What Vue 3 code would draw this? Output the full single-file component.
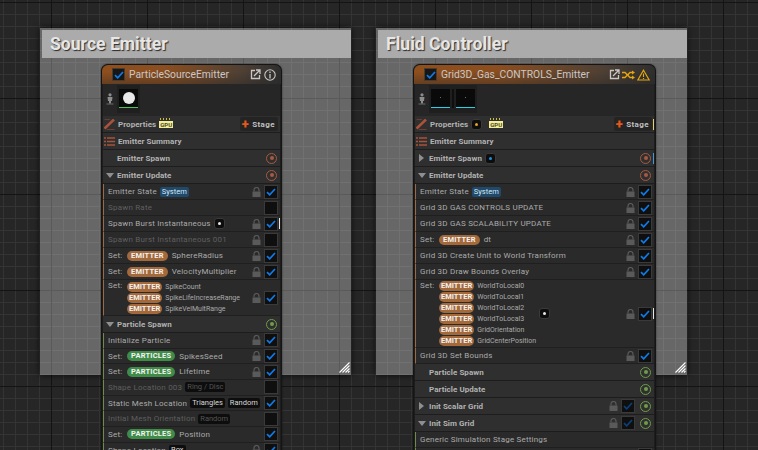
<template>
  <div class="graph">
    <div v-for="c in comments" :key="c.title" class="comment" :class="c.cls">
      <div class="comment-title">{{ c.title }}</div>
      <svg class="grip" width="11" height="11" viewBox="0 0 11 11">
        <path d="M0.5 10.5 L10.5 0.5 M3.5 10.5 L10.5 3.5 M6.5 10.5 L10.5 6.5 M9 10.5 L10.5 9" stroke="#fff" stroke-width="1.1" fill="none" />
      </svg>
    </div>

    <div v-for="n in nodes" :key="n.title" class="node" :class="n.cls">
      <div class="node-head">
        <span class="check head-check">
          <svg width="10" height="8" viewBox="0 0 10 8"><path d="M1 4.2 L3.7 6.8 L9 1" fill="none" stroke="#0f7be8" stroke-width="1.7" /></svg>
        </span>
        <span class="node-title">{{ n.title }}</span>
        <span class="spacer"></span>
        <svg class="head-icon" width="11" height="11" viewBox="0 0 11 11">
          <path d="M5 1.5 H1.5 V9.5 H9.5 V6" fill="none" stroke="#c8c8c8" stroke-width="1.3" />
          <path d="M4 7 L9.5 1.5 M6 1 H10 V5" fill="none" stroke="#c8c8c8" stroke-width="1.3" />
        </svg>
        <svg v-if="n.warn" class="head-icon" width="13" height="10" viewBox="0 0 13 10">
          <path d="M0 2.5 H3 L8 7.5 H10.5 M0 7.5 H3 L8 2.5 H10.5" fill="none" stroke="#e5a50f" stroke-width="1.3" />
          <path d="M10 0.5 L13 2.5 L10 4.5 Z M10 5.5 L13 7.5 L10 9.5 Z" fill="#e5a50f" />
        </svg>
        <svg v-if="n.warn" class="head-icon" width="13" height="12" viewBox="0 0 13 12">
          <path d="M6.5 1.2 L12.2 11 H0.8 Z" fill="none" stroke="#e5a50f" stroke-width="1.2" />
          <path d="M6.5 4.4 V8 M6.5 8.9 V10" stroke="#e5a50f" stroke-width="1.1" />
        </svg>
        <svg v-else class="head-icon head-info" width="12" height="12" viewBox="0 0 12 12">
          <circle cx="6" cy="6" r="5.2" fill="none" stroke="#c8c8c8" stroke-width="1.1" />
          <path d="M6 5 V9.4 M6 2.6 V4" stroke="#c8c8c8" stroke-width="1.3" />
        </svg>
      </div>

      <div class="thumbs">
        <svg width="8" height="12" viewBox="0 0 8 12">
          <circle cx="4" cy="1.8" r="1.6" fill="#8d8d8d" />
          <path d="M1.5 4 H6.5 L6 8 H5 V10.5 H3 V8 H2 Z" fill="#8d8d8d" />
          <path d="M0.5 11 H7.5" stroke="#6a6a6a" stroke-width="1" />
        </svg>
        <div class="thumb-strip">
          <template v-for="(t, i) in n.thumbs" :key="i">
            <span v-if="i > 0" class="thumb-sep"></span>
            <span class="thumb" :class="t"><i></i></span>
          </template>
        </div>
      </div>

      <div class="row props">
        <svg class="row-icon" width="11" height="11" viewBox="0 0 11 11">
          <path d="M0.5 9.5 L10 0.5" stroke="#a9533a" stroke-width="2.6" />
          <path d="M0.5 0.6 H6" stroke="#6e4034" stroke-width="1" fill="none" />
          <path d="M3 10.5 H10.5" stroke="#6e4034" stroke-width="1" fill="none" />
        </svg>
        <span class="section-label">Properties</span>
        <span v-if="n.warn" class="dot dot-amber"><i></i></span>
        <span class="gpu" :class="{ 'gpu-far': n.warn }">GPU</span>
        <span class="spacer"></span>
        <span class="stage"><b>+</b>Stage</span>
        <span v-if="n.warn" class="tick tick-yellow"></span>
      </div>
      <div class="row props">
        <svg class="row-icon" width="11" height="9" viewBox="0 0 11 9">
          <path d="M0 1 H2 M0 4.5 H2 M0 8 H2 M3 1 H11 M3 4.5 H11 M3 8 H11" stroke="#a9533a" stroke-width="1.4" />
        </svg>
        <span class="section-label">Emitter Summary</span>
      </div>

      <template v-for="(r, i) in n.rows" :key="i">
        <div v-if="r.section" class="row section">
          <span class="arrow" :class="r.arrow"></span>
          <span class="section-label">{{ r.section }}</span>
          <span v-if="r.dot" class="dot dot-blue"><i></i></span>
          <span class="spacer"></span>
          <svg v-if="r.check" class="lock" width="9" height="10" viewBox="0 0 9 10">
            <path d="M2 4.5 V3 A2.5 2.5 0 0 1 7 3 V4.5" fill="none" stroke="#5a5a5a" stroke-width="1.2" />
            <rect x="0.5" y="4.5" width="8" height="5.5" fill="#5a5a5a" />
          </svg>
          <span v-if="r.check" class="check section-check">
            <svg width="10" height="8" viewBox="0 0 10 8"><path d="M1 4.2 L3.7 6.8 L9 1" fill="none" stroke="#0b3f78" stroke-width="1.7" /></svg>
          </span>
          <span class="pin" :class="r.pin"><i></i></span>
          <span v-if="r.tick" class="tick tick-blue"></span>
        </div>

        <div v-else class="row module" :class="[r.accent, { off: r.off, tall: r.tall }]">
          <template v-if="r.sets">
            <span class="set-word" :class="{ 'set-top': r.sets.length > 1 }">Set:</span>
            <div class="set-list" :class="{ multi: r.sets.length > 1 }">
              <div v-for="s in r.sets" :key="s.name" class="set-line">
                <span class="pill" :class="s.pill.toLowerCase()">{{ s.pill }}</span>
                <span>{{ s.name }}</span>
              </div>
            </div>
          </template>
          <span v-else class="label">{{ r.label }}</span>
          <span v-for="c in r.chips" :key="c" class="chip" :class="{ system: c === 'System' }">{{ c }}</span>
          <span v-if="r.dot" class="dot"><i></i></span>
          <span class="spacer"></span>
          <svg v-if="r.lock" class="lock" width="9" height="10" viewBox="0 0 9 10">
            <path d="M2 4.5 V3 A2.5 2.5 0 0 1 7 3 V4.5" fill="none" stroke="#5a5a5a" stroke-width="1.2" />
            <rect x="0.5" y="4.5" width="8" height="5.5" fill="#5a5a5a" />
          </svg>
          <span v-if="r.check !== undefined" class="check">
            <svg v-if="r.check" width="10" height="8" viewBox="0 0 10 8"><path d="M1 4.2 L3.7 6.8 L9 1" fill="none" stroke="#0f7be8" stroke-width="1.7" /></svg>
          </span>
          <span v-if="r.tick" class="tick"></span>
        </div>
      </template>
    </div>
  </div>
</template>

<script setup>
const comments = [
  { title: "Source Emitter", cls: "comment-source" },
  { title: "Fluid Controller", cls: "comment-fluid" },
];

const emitter = (name) => ({ pill: "EMITTER", name });
const particles = (name) => ({ pill: "PARTICLES", name });

const nodes = [
  {
    title: "ParticleSourceEmitter",
    cls: "node-source",
    thumbs: ["thumb-ball"],
    rows: [
      { section: "Emitter Spawn", pin: "orange" },
      { section: "Emitter Update", arrow: "down", pin: "orange" },
      { label: "Emitter State", chips: ["System"], lock: true, check: true, accent: "amber" },
      { label: "Spawn Rate", off: true, check: false, accent: "amber" },
      { label: "Spawn Burst Instantaneous", dot: true, lock: true, check: true, tick: true, accent: "amber" },
      { label: "Spawn Burst Instantaneous 001", off: true, lock: true, check: false, accent: "amber" },
      { sets: [emitter("SphereRadius")], lock: true, check: true, accent: "amber" },
      { sets: [emitter("VelocityMultiplier")], lock: true, check: true, accent: "amber" },
      {
        sets: [emitter("SpikeCount"), emitter("SpikeLifeIncreaseRange"), emitter("SpikeVelMultRange")],
        lock: true,
        check: true,
        tall: true,
        accent: "amber",
      },
      { section: "Particle Spawn", arrow: "down", pin: "green" },
      { label: "Initialize Particle", lock: true, check: true, accent: "olive" },
      { sets: [particles("SpikesSeed")], lock: true, check: true, accent: "olive" },
      { sets: [particles("Lifetime")], lock: true, check: true, accent: "olive" },
      { label: "Shape Location 003", chips: ["Ring / Disc"], off: true, check: false, accent: "olive" },
      { label: "Static Mesh Location", chips: ["Triangles", "Random"], check: true, accent: "olive" },
      { label: "Initial Mesh Orientation", chips: ["Random"], off: true, check: false, accent: "olive" },
      { sets: [particles("Position")], check: true, accent: "olive" },
      { label: "Shape Location", chips: ["Box"], lock: true, check: true, accent: "olive" },
    ],
  },
  {
    title: "Grid3D_Gas_CONTROLS_Emitter",
    cls: "node-fluid",
    warn: true,
    thumbs: ["thumb-dark", "thumb-dark"],
    rows: [
      { section: "Emitter Spawn", arrow: "right", pin: "orange", dot: true, tick: true },
      { section: "Emitter Update", arrow: "down", pin: "orange" },
      { label: "Emitter State", chips: ["System"], lock: true, check: true, accent: "amber" },
      { label: "Grid 3D GAS CONTROLS UPDATE", lock: true, check: true, accent: "amber" },
      { label: "Grid 3D GAS SCALABILITY UPDATE", lock: true, check: true, accent: "amber" },
      { sets: [emitter("dt")], lock: true, check: true, accent: "amber" },
      { label: "Grid 3D Create Unit to World Transform", lock: true, check: true, accent: "amber" },
      { label: "Grid 3D Draw Bounds Overlay", lock: true, check: true, accent: "amber" },
      {
        sets: [
          emitter("WorldToLocal0"),
          emitter("WorldToLocal1"),
          emitter("WorldToLocal2"),
          emitter("WorldToLocal3"),
          emitter("GridOrientation"),
          emitter("GridCenterPosition"),
        ],
        dot: true,
        lock: true,
        check: true,
        tick: true,
        accent: "amber",
      },
      { label: "Grid 3D Set Bounds", lock: true, check: true, accent: "amber" },
      { section: "Particle Spawn", pin: "green" },
      { section: "Particle Update", pin: "green" },
      { section: "Init Scalar Grid", arrow: "right", pin: "green", check: true },
      { section: "Init Sim Grid", arrow: "down", pin: "green", check: true },
      { label: "Generic Simulation Stage Settings", accent: "olive" },
      { label: "", check: false, accent: "olive" },
    ],
  },
];
</script>

<style>
html,
body {
  margin: 0;
  background: #262626;
}
</style>

<style scoped>
.graph {
  position: relative;
  width: 758px;
  height: 450px;
  overflow: hidden;
  font-family: Roboto, "Liberation Sans", sans-serif;
  background-color: #262626;
  background-image:
    linear-gradient(#141414 1px, transparent 1px),
    linear-gradient(90deg, #141414 1px, transparent 1px),
    linear-gradient(#343434 1px, transparent 1px),
    linear-gradient(90deg, #343434 1px, transparent 1px);
  background-size: 96px 96px, 96px 96px, 12px 12px, 12px 12px;
  background-position: 0 2px, 51px 0, 0 2px, 3px 0;
}

.comment {
  position: absolute;
  top: 28px;
  width: 311px;
  height: 347px;
  box-sizing: border-box;
  padding-top: 2px;
  padding-left: 2px;
  background: rgba(255, 255, 255, 0.3);
  box-shadow: 0 0 7px rgba(0, 0, 0, 0.75);
}

.comment-source {
  left: 40px;
}

.comment-fluid {
  left: 376px;
}

.comment-title {
  height: 28px;
  line-height: 29px;
  padding-left: 8px;
  background: #ababab;
  color: #e6e6e6;
  font-size: 17.6px;
  font-weight: 700;
  text-shadow: 1px 1px 1px #2a2a2a;
}

.grip {
  position: absolute;
  right: 1px;
  bottom: 2px;
}

.node {
  position: absolute;
  top: 64px;
  box-sizing: border-box;
  padding: 0 1px;
  background: #1d1d1d;
  border: 1px solid #151515;
  border-bottom: 0;
  border-radius: 7px 7px 0 0;
  box-shadow: 0 0 2px rgba(0, 0, 0, 0.6);
}

.node-source {
  left: 101px;
  width: 181px;
}

.node-fluid {
  left: 413px;
  width: 243px;
}

.node-head {
  display: flex;
  align-items: center;
  height: 19px;
  padding: 0 5px 0 10px;
  margin: 0 -1px;
  border-radius: 6px 6px 0 0;
  background:
    linear-gradient(180deg, rgba(0, 0, 0, 0) 35%, rgba(38, 38, 38, 0.4) 100%),
    linear-gradient(90deg, #8f4f1d 0%, #8a4e20 35%, #4f4034 78%, #2e2e2e 100%);
}

.node-title {
  margin-left: 4px;
  font-size: 10.3px;
  color: #c8c8c8;
  white-space: nowrap;
}

.head-icon {
  margin-left: 2px;
}

.head-info {
  margin-left: 3px;
}

.spacer {
  flex: 1;
}

.thumbs {
  display: flex;
  align-items: center;
  gap: 3px;
  height: 32px;
  padding: 0 0 3px 3px;
  box-sizing: border-box;
  background: #262626;
}

.thumb-strip {
  display: flex;
  gap: 3px;
  padding: 4px 2px 5px;
  background: #1f1f1f;
}

.thumb {
  position: relative;
  display: block;
  width: 19px;
  height: 18px;
  background: #0a0a0a;
}

.thumb-ball {
  border-bottom: 1px solid #4fc15a;
}

.thumb-ball i {
  position: absolute;
  left: 3.5px;
  top: 3px;
  width: 12px;
  height: 12px;
  border-radius: 50%;
  background: #e8e8e8;
}

.thumb-dark {
  border-bottom: 1px solid #26d3e6;
}

.thumb-dark i {
  position: absolute;
  left: 9px;
  top: 8px;
  width: 1px;
  height: 1px;
  background: #6a6a6a;
}

.thumb-sep {
  width: 2px;
  margin-left: -1px;
  margin-right: -1px;
  background: #0f0f0f;
}

.row {
  position: relative;
  display: flex;
  align-items: center;
  box-sizing: border-box;
  min-height: 16px;
  font-size: 8px;
  letter-spacing: 0.2px;
  color: #ababab;
  white-space: nowrap;
}

.props {
  height: 17px;
  padding: 0 2px 0 1px;
  background: #2f2f2f;
  border-bottom: 1px solid #1d1d1d;
}

.row-icon {
  width: 11px;
  margin-right: 3px;
  flex: none;
}

.section {
  height: 17px;
  padding: 0 3px 0 14px;
  background: #2f2f2f;
  border-bottom: 1px solid #1d1d1d;
}

.section-label {
  font-weight: 700;
  color: #b2b2b2;
  letter-spacing: 0.05px;
}

.arrow {
  position: absolute;
  left: 3px;
  top: 50%;
}

.arrow.down {
  margin-top: -2px;
  border-left: 4px solid transparent;
  border-right: 4px solid transparent;
  border-top: 5px solid #8f8f8f;
}

.arrow.right {
  margin-top: -4px;
  margin-left: 1px;
  border-top: 4px solid transparent;
  border-bottom: 4px solid transparent;
  border-left: 5px solid #8f8f8f;
}

.pin {
  position: relative;
  flex: none;
  box-sizing: border-box;
  width: 11px;
  height: 11px;
  border: 1px solid;
  border-radius: 50%;
}

.pin i {
  position: absolute;
  left: 2.5px;
  top: 2.5px;
  width: 4px;
  height: 4px;
  border-radius: 50%;
  background: currentColor;
}

.pin.orange {
  color: #a65a42;
}

.pin.green {
  color: #6f9c4a;
}

.module {
  padding: 0 2px 0 4px;
  background: #2a2a2a;
  border-left: 1px solid;
  border-bottom: 1px solid #1f1f1f;
}

.module.amber {
  border-left-color: #9a6a45;
}

.module.olive {
  border-left-color: #6f8a4a;
  min-height: 15.7px;
  height: 15.7px;
}

.module.tall {
  min-height: 36px;
}

.module.off {
  color: #5f5f5f;
}

.set-word {
  width: 19px;
  flex: none;
}

.set-top {
  align-self: flex-start;
  margin-top: 1px;
}

.set-list {
  display: flex;
  flex-direction: column;
  gap: 1px;
}

.set-list.multi {
  padding: 1px 0;
  font-size: 7px;
  letter-spacing: 0;
}

.set-line {
  display: flex;
  align-items: center;
  gap: 4px;
  height: 10px;
}

.set-list.multi .set-line {
  gap: 3px;
}

.pill {
  padding: 0 4px;
  height: 10px;
  line-height: 10px;
  border-radius: 5px;
  color: #f2f2f2;
  font-weight: 700;
  font-size: 7.5px;
  letter-spacing: 0.2px;
}

.set-list.multi .pill {
  padding: 0 2px;
  letter-spacing: 0;
}

.pill.emitter {
  background: #a4693a;
}

.pill.particles {
  background: #3f8c48;
}

.chip {
  margin-left: 3px;
  padding: 0 2px;
  height: 10px;
  line-height: 10px;
  border-radius: 2px;
  background: #0d0d0d;
  color: #d8d8d8;
  font-size: 7.5px;
  letter-spacing: 0;
}

.off .chip {
  color: #555;
}

.chip.system {
  background: #1f4a6b;
  color: #d8e6f0;
}

.dot {
  position: relative;
  flex: none;
  display: inline-block;
  margin-left: 3px;
  width: 11px;
  height: 11px;
  border-radius: 3px;
  background: #0d0d0d;
  border: 1px solid #3a3a3a;
  box-sizing: border-box;
}

.dot i {
  position: absolute;
  left: 3px;
  top: 3px;
  width: 3px;
  height: 3px;
  border-radius: 50%;
  background: #e8e8e8;
}

.dot-amber i {
  background: #e8a020;
}

.dot-blue i {
  background: #1f8fe0;
}

.gpu {
  position: relative;
  margin-left: 3px;
  padding: 0 1px;
  height: 7px;
  line-height: 7px;
  background: #f4ee96;
  color: #4a4a30;
  font-size: 6px;
  font-weight: 700;
  letter-spacing: 0;
}

.gpu::before {
  content: "";
  position: absolute;
  left: 1px;
  right: 1px;
  top: -3px;
  height: 2px;
  background: repeating-linear-gradient(90deg, #c9b94a 0 1px, transparent 1px 3px);
}

.gpu-far {
  margin-left: 7px;
}

.stage {
  display: flex;
  align-items: center;
  height: 14px;
  padding: 0 3px 0 2px;
  background: #242424;
  border-radius: 2px;
  color: #c0c0c0;
  font-weight: 700;
  letter-spacing: 0.4px;
}

.stage b {
  margin-right: 3px;
  color: #e2591a;
  font-size: 13px;
  line-height: 12px;
}

.lock {
  flex: none;
  margin-right: 3px;
}

.check {
  display: flex;
  flex: none;
  align-items: center;
  justify-content: center;
  box-sizing: border-box;
  width: 14px;
  height: 14px;
  background: #0f0f0f;
  border: 1px solid #3a3a3a;
}

.head-check {
  width: 13px;
  height: 13px;
  background: #161616;
  border: 1px solid #4a3a2c;
}

.section-check {
  margin-right: 5px;
}

.tick {
  position: absolute;
  right: 0;
  top: 50%;
  width: 1px;
  height: 11px;
  margin-top: -5.5px;
  background: #e6e6e6;
}

.tick-yellow {
  background: #e8d070;
}

.tick-blue {
  background: #3d9bd8;
}
</style>
